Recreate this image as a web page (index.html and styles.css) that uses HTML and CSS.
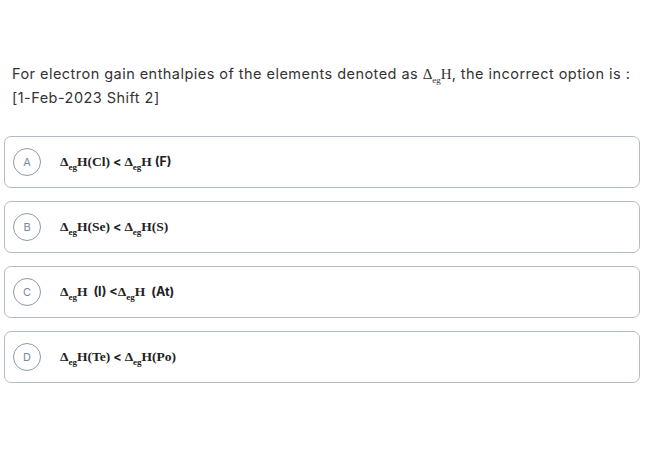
FILE: index.html
```html
<!DOCTYPE html>
<html>
<head>
<meta charset="utf-8">
<link rel="stylesheet" href="styles.css">
</head>
<body>
<div class="page">
  <div class="question">For electron gain enthalpies of the elements denoted as <span class="m">Δ<sub>eg</sub>H</span>, the incorrect option is :<br>[1-Feb-2023 Shift 2]</div>
  <div class="options">
    <div class="opt"><span class="badge">A</span><span class="ans"><span class="m">Δ<sub>eg</sub>H(Cl)</span> &lt; <span class="m">Δ<sub>eg</sub>H</span> (F)</span></div>
    <div class="opt"><span class="badge">B</span><span class="ans"><span class="m">Δ<sub>eg</sub>H(Se)</span> &lt; <span class="m">Δ<sub>eg</sub>H(S)</span></span></div>
    <div class="opt"><span class="badge">C</span><span class="ans"><span class="m">Δ<sub>eg</sub>H</span> &nbsp;(I) &lt;<span class="m">Δ<sub>eg</sub>H</span> &nbsp;(At)</span></div>
    <div class="opt"><span class="badge">D</span><span class="ans"><span class="m">Δ<sub>eg</sub>H(Te)</span> &lt; <span class="m">Δ<sub>eg</sub>H(Po)</span></span></div>
  </div>
</div>
</body>
</html>
```
FILE: styles.css
```css
html, body { margin: 0; padding: 0; background: #fff; }
.page {
  padding: 62px 10px 0 4px;
  font-family: "Inter", sans-serif;
  color: #333;
}
.question {
  padding-left: 8px;
  font-size: 14.5px;
  line-height: 24px;
  letter-spacing: 0.46px;
  color: #333;
}
.question .m { font-weight: normal; font-size: 15px; letter-spacing: 0; }
.m {
  font-family: "Liberation Serif", serif;
}
sub {
  font-size: 9px;
  vertical-align: -4px;
  line-height: 0;
}
.options {
  margin-top: 26px;
  display: flex;
  flex-direction: column;
  gap: 13px;
}
.opt {
  box-sizing: border-box;
  height: 52px;
  border: 1.5px solid #b4bcc4;
  border-radius: 7px;
  display: flex;
  align-items: center;
  padding-left: 8px;
}
.badge {
  width: 28px;
  height: 28px;
  box-sizing: border-box;
  border: 1px solid #8a9aac;
  border-radius: 50%;
  display: flex;
  align-items: center;
  justify-content: center;
  font-size: 11px;
  color: #7a8a9c;
}
.ans {
  margin-left: 19px;
  font-size: 12.5px;
  font-weight: bold;
  color: #222;
}
.ans .m { font-size: 13.5px; }
```
